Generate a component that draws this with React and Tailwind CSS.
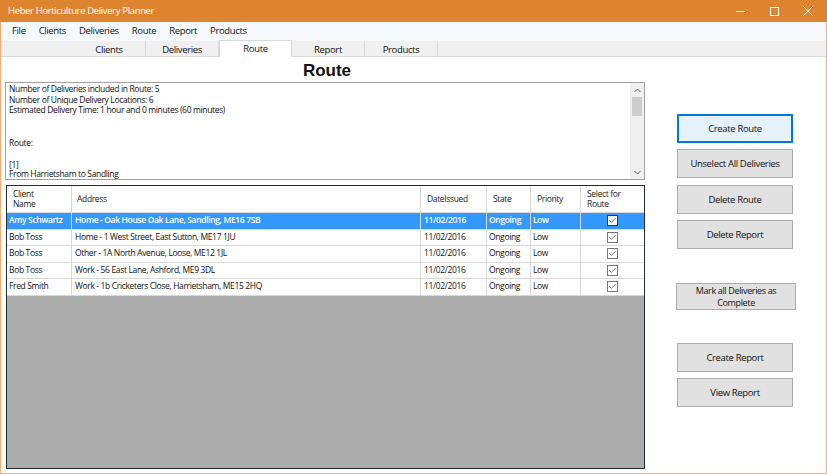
import { Check } from "lucide-react";

const ROWS = [
  { name: "Amy Schwartz", address: "Home - Oak House Oak Lane, Sandling, ME16 7SB", date: "11/02/2016", state: "Ongoing", priority: "Low", selected: true },
  { name: "Bob Toss", address: "Home - 1 West Street, East Sutton, ME17 1JU", date: "11/02/2016", state: "Ongoing", priority: "Low" },
  { name: "Bob Toss", address: "Other - 1A North Avenue, Loose, ME12 1JL", date: "11/02/2016", state: "Ongoing", priority: "Low" },
  { name: "Bob Toss", address: "Work - 56 East Lane, Ashford, ME9 3DL", date: "11/02/2016", state: "Ongoing", priority: "Low" },
  { name: "Fred Smith", address: "Work - 1b Cricketers Close, Harrietsham, ME15 2HQ", date: "11/02/2016", state: "Ongoing", priority: "Low" },
];

const MENU = ["File", "Clients", "Deliveries", "Route", "Report", "Products"];
const TABS = ["Clients", "Deliveries", "Route", "Report", "Products"];

function WinButton({ children, className = "", active }) {
  return (
    <button
      type="button"
      className={`flex flex-col items-center justify-center border bg-[#e1e1e1] text-center text-[9.5px] leading-[12px] text-[#111] ${
        active ? "border-[#0078d7] bg-[#e5f1fb] shadow-[inset_0_0_0_1px_#0078d7]" : "border-[#adadad]"
      } ${className}`}
    >
      {children}
    </button>
  );
}

function CheckBox({ selected }) {
  return (
    <span className={`flex h-[11px] w-[11px] items-center justify-center border ${selected ? "border-[#333] bg-white" : "border-[#777] bg-white"}`}>
      <Check size={9} strokeWidth={2} className={selected ? "text-[#222]" : "text-[#555]"} />
    </span>
  );
}

export default function App() {
  return (
    <div className="flex h-[474px] w-[827px] flex-col overflow-hidden bg-white font-['Open_Sans',_'Noto_Sans',sans-serif] tracking-[-0.35px] text-[#111]">
      {/* title bar */}
      <div className="flex h-[22px] shrink-0 items-center justify-between bg-[#df842e] pl-[8px] text-white">
        <span className="text-[9.5px]">Heber Horticulture Delivery Planner</span>
        <div className="flex h-full items-center pr-[2px]">
          <span className="flex h-full w-[34px] items-center justify-center">
            <span className="h-px w-[9px] bg-white" />
          </span>
          <span className="flex h-full w-[34px] items-center justify-center">
            <span className="h-[9px] w-[9px] border border-white" />
          </span>
          <span className="flex h-full w-[34px] items-center justify-center">
            <svg width="10" height="10" viewBox="0 0 10 10" stroke="white" strokeWidth="1">
              <path d="M0.5 0.5 L9.5 9.5 M9.5 0.5 L0.5 9.5" />
            </svg>
          </span>
        </div>
      </div>

      <div className="flex min-h-0 flex-1 flex-col border-x border-b border-[#e9b07a]">
        {/* menu */}
        <div className="flex h-[19px] shrink-0 items-center gap-[13px] bg-[#f5f9fc] pl-[11px] text-[9.5px]">
          {MENU.map((m) => (
            <span key={m}>{m}</span>
          ))}
        </div>

        {/* tabs */}
        <div className="flex h-[16px] shrink-0 items-end border-b border-[#d9d9d9] bg-[#f0f0f0] pl-[72px]">
          {TABS.map((t) => (
            <div
              key={t}
              className={`flex w-[73px] justify-center border-r border-[#d9d9d9] text-[9.5px] ${
                t === "Route" ? "-mb-px h-[17px] items-start border-l border-t bg-white pt-[1px]" : "h-[15px] items-end leading-[13px]"
              }`}
            >
              {t}
            </div>
          ))}
        </div>

        {/* content */}
        <div className="flex min-h-0 flex-1">
          <div className="flex w-[644px] shrink-0 flex-col pl-[4px]">
            <h1 className="flex h-[25px] items-center justify-center pl-[4px] pt-[3px] font-['Liberation_Sans',_Arial,sans-serif] text-[17px] font-bold tracking-normal">
              Route
            </h1>

            <div className="flex h-[98px] shrink-0 border border-[#a0a0a0]">
              <div className="flex-1 pl-[3px] pt-[1px] text-[8.5px] leading-[10.5px]">
                <p>Number of Deliveries included in Route: 5</p>
                <p>Number of Unique Delivery Locations: 6</p>
                <p>Estimated Delivery Time: 1 hour and 0 minutes (60 minutes)</p>
                <p>&nbsp;</p>
                <p>&nbsp;</p>
                <p className="mt-[1px]">Route:</p>
                <p>&nbsp;</p>
                <p className="mt-[1px]">[1]</p>
                <p className="-mt-px">From Harrietsham to Sandling</p>
              </div>
              <div className="flex w-[14px] flex-col bg-[#f0f0f0]">
                <span className="flex h-[14px] items-center justify-center">
                  <svg width="7" height="5" viewBox="0 0 7 5" fill="none" stroke="#606060" strokeWidth="1">
                    <path d="M0.5 4 L3.5 1 L6.5 4" />
                  </svg>
                </span>
                <span className="mx-[2px] h-[19px] bg-[#cdcdcd]" />
                <span className="flex-1" />
                <span className="flex h-[14px] items-center justify-center">
                  <svg width="7" height="5" viewBox="0 0 7 5" fill="none" stroke="#606060" strokeWidth="1">
                    <path d="M0.5 1 L3.5 4 L6.5 1" />
                  </svg>
                </span>
              </div>
            </div>

            {/* grid */}
            <div className="ml-[1px] mt-[5px] flex h-[284px] flex-col border border-[#1f2a33] bg-[#ababab] text-[8.5px]">
              <div className="flex h-[26px] shrink-0 bg-white text-[#222]">
                <div className="flex w-[65px] items-center border-r border-[#d8d8d8] pl-[6px] leading-[10px]">
                  Client<br />Name
                </div>
                <div className="flex w-[349px] items-center border-r border-[#d8d8d8] pl-[5px]">Address</div>
                <div className="flex w-[66px] items-center border-r border-[#d8d8d8] pl-[6px]">DateIssued</div>
                <div className="flex w-[44px] items-center border-r border-[#d8d8d8] pl-[6px]">State</div>
                <div className="flex w-[50px] items-center border-r border-[#d8d8d8] pl-[6px]">Priority</div>
                <div className="flex flex-1 items-center pl-[6px] leading-[10px]">
                  Select for<br />Route
                </div>
              </div>
              {ROWS.map((r, i) => (
                <div
                  key={i}
                  className={`flex h-[16.5px] shrink-0 border-t border-[#d8d8d8] ${
                    r.selected ? "bg-[#3399ff] font-semibold text-white" : "bg-white text-[#111]"
                  }`}
                >
                  <div className="flex w-[65px] items-center border-r border-[#d8d8d8] pl-[2px]">{r.name}</div>
                  <div className="flex w-[349px] items-center border-r border-[#d8d8d8] pl-[3px]">{r.address}</div>
                  <div className="flex w-[66px] items-center border-r border-[#d8d8d8] pl-[3px]">{r.date}</div>
                  <div className="flex w-[44px] items-center border-r border-[#d8d8d8] pl-[2px]">{r.state}</div>
                  <div className="flex w-[50px] items-center border-r border-[#d8d8d8] pl-[2px]">{r.priority}</div>
                  <div className="flex flex-1 items-center justify-center">
                    <CheckBox selected={r.selected} />
                  </div>
                </div>
              ))}
              <div className="flex-1 border-t border-[#d8d8d8]" />
            </div>
          </div>

          {/* buttons */}
          <div className="flex flex-1 flex-col pl-[32px] pt-[57px]">
            <WinButton active className="h-[29px] w-[116px]">Create Route</WinButton>
            <WinButton className="mt-[6px] h-[29px] w-[116px]">Unselect All Deliveries</WinButton>
            <WinButton className="mt-[7px] h-[29px] w-[116px]">Delete Route</WinButton>
            <WinButton className="mt-[6px] h-[29px] w-[116px]">Delete Report</WinButton>
            <WinButton className="-ml-px mt-[34px] h-[27px] w-[120px] text-[9px] leading-[11px]">
              <span>Mark all Deliveries as</span>
              <span>Complete</span>
            </WinButton>
            <WinButton className="mt-[33px] h-[29px] w-[116px]">Create Report</WinButton>
            <WinButton className="mt-[6px] h-[29px] w-[116px]">View Report</WinButton>
          </div>
        </div>
      </div>
    </div>
  );
}
